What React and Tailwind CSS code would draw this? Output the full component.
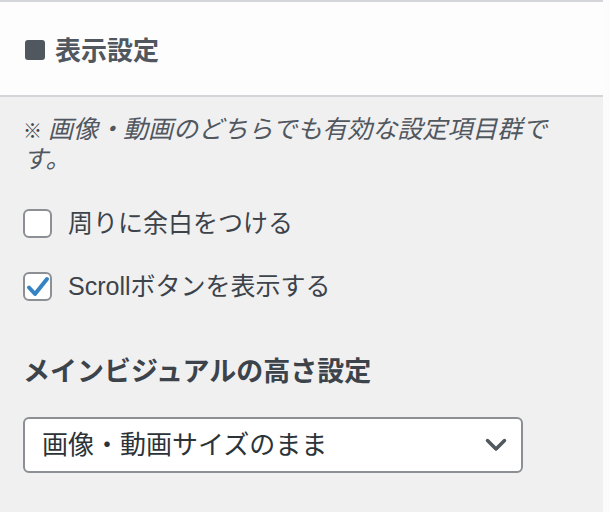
import React from "react";

const font = { fontFamily: '"Liberation Sans", "Noto Sans CJK JP", sans-serif' };

function Checkbox({ checked }) {
  return (
    <div className="w-[29px] h-[29px] shrink-0 rounded-[6px] border-2 border-[#8c8f94] bg-white flex items-center justify-center">
      {checked && (
        <svg width="29" height="29" viewBox="0 0 29 29" className="-m-[2px]">
          <path
            d="M6 15.5 L12 22 L24 7"
            fill="none"
            stroke="#3582c4"
            strokeWidth="4"
            strokeLinecap="round"
            strokeLinejoin="round"
          />
        </svg>
      )}
    </div>
  );
}

export default function App() {
  return (
    <div className="h-[512px] w-[610px] bg-[#fcfcfc] flex" style={font}>
      <div className="w-[603px] h-full bg-[#f0f0f1] flex flex-col">
        <div className="h-[2px] bg-[#d4d5d8]" />
        <div className="h-[93px] bg-[#fdfdfd] flex items-center pl-[25px] pt-[4px] gap-[10px]">
          <div className="w-[20px] h-[20px] rounded-[3px] bg-[#50575e] -mt-[2px]" />
          <div className="text-[26px] leading-[36px] font-bold text-[#50575e]">表示設定</div>
        </div>
        <div className="h-[2px] bg-[#d4d5d8]" />
        <div className="flex flex-col pl-[23px] pr-[22px]">
          <p className="pt-[17px] text-[25px] leading-[30px] italic text-[#50575e]">
            <span className="inline-block text-[19px] leading-none not-italic font-bold mr-[6px] text-[#3c434a]">※</span>
            画像・動画のどちらでも有効な設定項目群です。
          </p>
          <label className="mt-[35px] flex items-center gap-[16px] text-[25px] leading-[29px] text-[#3c434a]">
            <Checkbox checked={false} />
            <span>周りに余白をつける</span>
          </label>
          <label className="mt-[34px] flex items-center gap-[16px] text-[25px] leading-[29px] text-[#3c434a]">
            <Checkbox checked={true} />
            <span>Scrollボタンを表示する</span>
          </label>
          <h3 className="mt-[53px] text-[27px] leading-[36px] font-bold text-[#3c434a]">
            メインビジュアルの高さ設定
          </h3>
          <div className="mt-[27px] w-[500px] h-[56px] rounded-[6px] border-2 border-[#8c8f94] bg-white flex items-center justify-between pl-[17px] pr-[14px]">
            <span className="text-[26px] leading-[36px] text-[#2c3338]">画像・動画サイズのまま</span>
            <svg width="22" height="14" viewBox="0 0 22 14">
              <path
                d="M2.5 2.5 L11 11 L19.5 2.5"
                fill="none"
                stroke="#50575e"
                strokeWidth="3.5"
                strokeLinecap="round"
                strokeLinejoin="round"
              />
            </svg>
          </div>
        </div>
      </div>
    </div>
  );
}
